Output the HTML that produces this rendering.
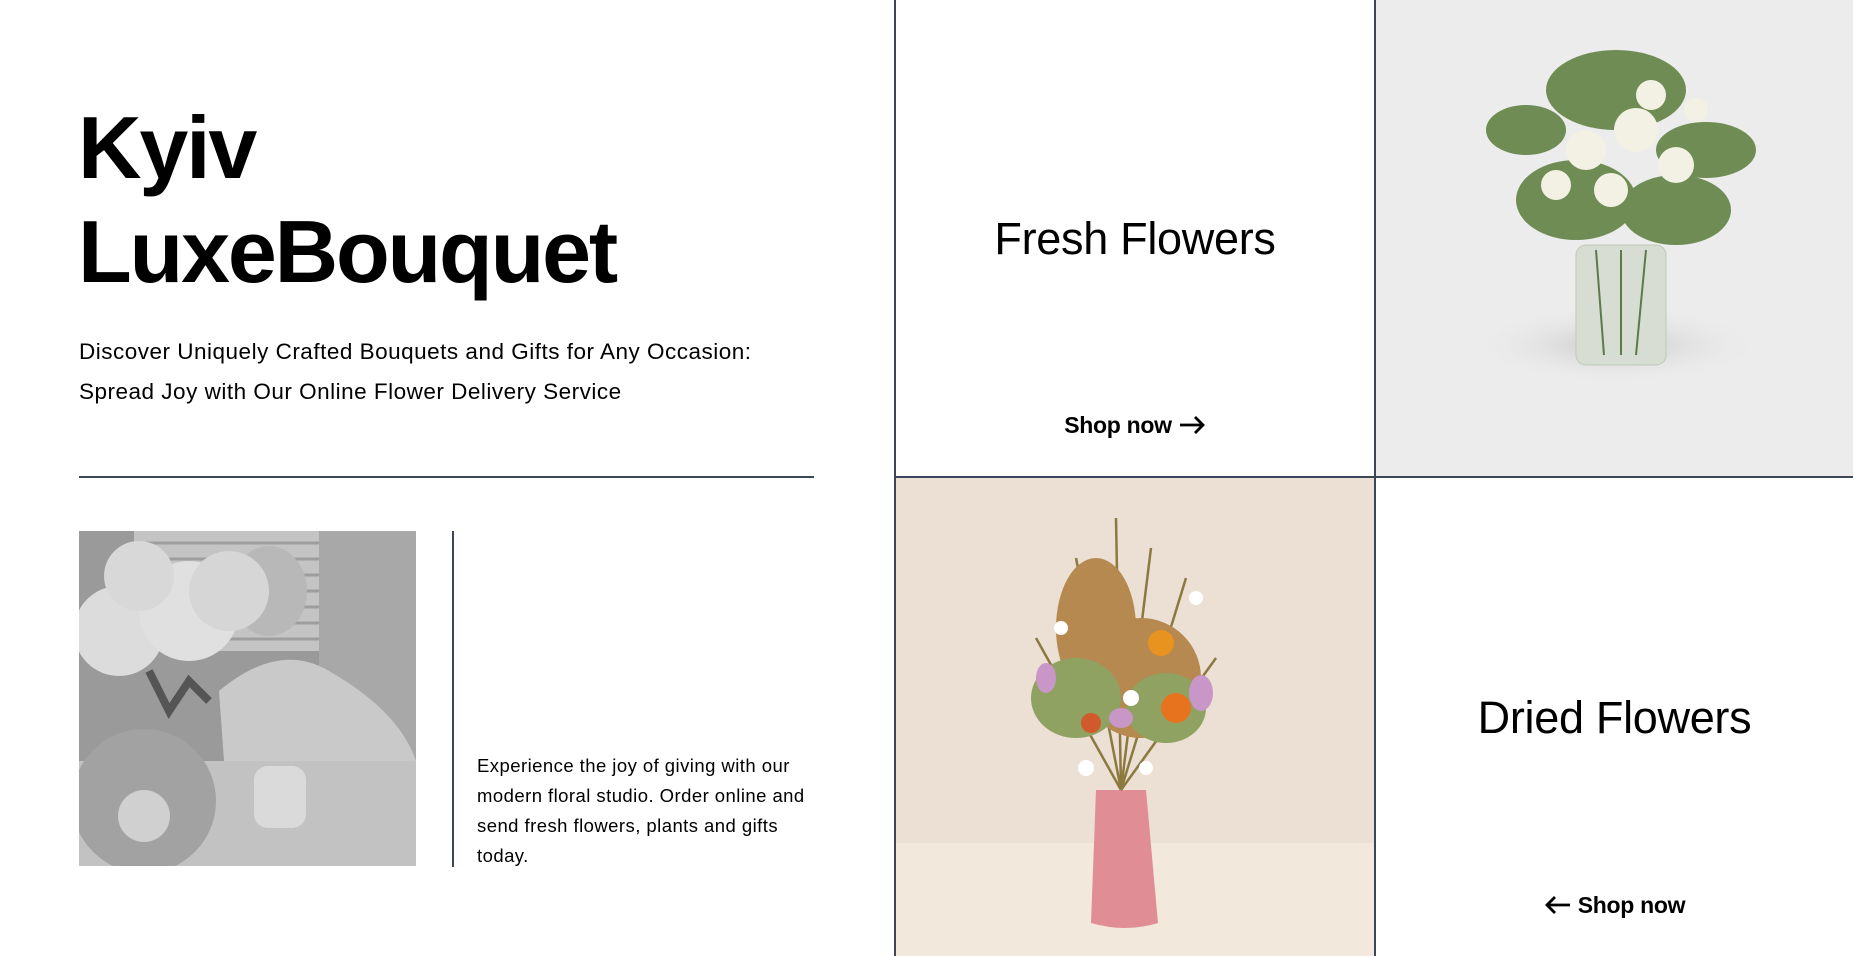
<!DOCTYPE html>
<html><head><meta charset="utf-8">
<style>
*{margin:0;padding:0;box-sizing:border-box}
body{width:1853px;height:956px;overflow:hidden;background:#fff;font-family:"Liberation Sans",sans-serif;color:#000;position:relative}
.abs{position:absolute}
h1{position:absolute;left:78px;top:96px;font-size:88px;line-height:104px;font-weight:700;letter-spacing:-2.2px}
.sub{left:79px;top:332px;font-size:22.5px;line-height:40px;letter-spacing:0.5px}
.para{left:477px;top:751px;font-size:18.5px;line-height:30px;width:335px;letter-spacing:0.45px}
.cell{position:absolute;display:flex;align-items:center;justify-content:center}
.title{font-size:45px;letter-spacing:-0.3px}
.shop{font-size:23px;font-weight:700;letter-spacing:-0.3px;display:flex;align-items:center;gap:6px}
</style></head><body>
<h1>Kyiv<br>LuxeBouquet</h1>
<div class="abs sub">Discover Uniquely Crafted Bouquets and Gifts for Any Occasion:<br>Spread Joy with Our Online Flower Delivery Service</div>
<div class="abs" style="left:79px;top:476px;width:735px;height:2px;background:#3b4658"></div>
<svg class="abs" style="left:79px;top:531px" width="337" height="335" viewBox="0 0 337 335">
<rect width="337" height="335" fill="#9a9a9a"/>
<rect x="55" y="0" width="185" height="120" fill="#c4c4c4"/>
<g stroke="#9e9e9e" stroke-width="3">
<line x1="55" y1="12" x2="240" y2="12"/><line x1="55" y1="28" x2="240" y2="28"/><line x1="55" y1="44" x2="240" y2="44"/><line x1="55" y1="60" x2="240" y2="60"/><line x1="55" y1="76" x2="240" y2="76"/><line x1="55" y1="92" x2="240" y2="92"/><line x1="55" y1="108" x2="240" y2="108"/></g>
<rect x="240" y="0" width="97" height="335" fill="#a8a8a8"/>
<path d="M140 160 Q200 110 250 140 Q320 180 337 230 L337 300 L150 300 Z" fill="#c9c9c9"/>
<ellipse cx="190" cy="60" rx="38" ry="45" fill="#b8b8b8"/>
<rect x="0" y="230" width="337" height="105" fill="#c2c2c2"/>
<circle cx="40" cy="100" r="45" fill="#dcdcdc"/><circle cx="110" cy="80" r="50" fill="#e0e0e0"/><circle cx="150" cy="60" r="40" fill="#d6d6d6"/><circle cx="60" cy="45" r="35" fill="#d8d8d8"/>
<path d="M70 140 L90 180 L110 150 L130 170" stroke="#555" stroke-width="8" fill="none"/>
<circle cx="65" cy="270" r="72" fill="#a2a2a2"/><circle cx="65" cy="285" r="26" fill="#d0d0d0"/>
<rect x="175" y="235" width="52" height="62" rx="14" fill="#dadada"/>
</svg>
<div class="abs" style="left:452px;top:531px;width:2px;height:336px;background:#3b4658"></div>
<div class="abs para">Experience the joy of giving with our modern floral studio. Order online and send fresh flowers, plants and gifts today.</div>

<div class="abs" style="left:894px;top:0;width:2px;height:956px;background:#3b4658"></div>
<div class="abs" style="left:1374px;top:0;width:2px;height:956px;background:#3b4658"></div>
<div class="abs" style="left:895px;top:476px;width:958px;height:2px;background:#3b4658"></div>

<div class="cell title" style="left:896px;top:200px;width:478px;height:78px">Fresh Flowers</div>
<div class="cell" style="left:896px;top:408px;width:478px;height:34px"><span class="shop">Shop now <svg width="28" height="20" viewBox="0 0 28 20"><path d="M2 10H25M17 2l8 8-8 8" stroke="#000" stroke-width="2.8" fill="none"/></svg></span></div>

<svg class="abs" style="left:1376px;top:0" width="477" height="476" viewBox="0 0 477 476">
<defs><radialGradient id="sh"><stop offset="0" stop-color="#c8c8c8"/><stop offset="1" stop-color="#ececec" stop-opacity="0"/></radialGradient></defs>
<rect width="477" height="476" fill="#ececec"/>
<ellipse cx="240" cy="345" rx="150" ry="40" fill="url(#sh)"/>
<rect x="200" y="245" width="90" height="120" rx="10" fill="#d7ddd2" stroke="#bfc7bb"/>
<g stroke="#5d7a4a" stroke-width="2"><line x1="220" y1="250" x2="228" y2="355"/><line x1="245" y1="250" x2="245" y2="355"/><line x1="270" y1="250" x2="260" y2="355"/></g>
<g fill="#6f8c55"><ellipse cx="150" cy="130" rx="40" ry="25"/><ellipse cx="330" cy="150" rx="50" ry="28"/><ellipse cx="240" cy="90" rx="70" ry="40"/><ellipse cx="200" cy="200" rx="60" ry="40"/><ellipse cx="300" cy="210" rx="55" ry="35"/></g>
<g fill="#f3f1e4"><circle cx="210" cy="150" r="20"/><circle cx="260" cy="130" r="22"/><circle cx="300" cy="165" r="18"/><circle cx="235" cy="190" r="17"/><circle cx="180" cy="185" r="15"/><circle cx="275" cy="95" r="15"/><circle cx="320" cy="110" r="12"/></g>
</svg>

<svg class="abs" style="left:896px;top:478px" width="478" height="478" viewBox="0 0 478 478">
<rect width="478" height="478" fill="#ecdfd3"/>
<rect y="365" width="478" height="113" fill="#f3e8dc"/>
<path d="M200 312 L250 312 L262 445 Q230 455 195 445 Z" fill="#e08d96"/>
<g stroke="#8a7a40" stroke-width="2.5"><line x1="225" y1="312" x2="180" y2="80"/><line x1="225" y1="312" x2="255" y2="70"/><line x1="225" y1="312" x2="220" y2="40"/><line x1="225" y1="312" x2="290" y2="100"/><line x1="225" y1="312" x2="140" y2="160"/><line x1="225" y1="312" x2="320" y2="180"/></g>
<g fill="#b5894f"><ellipse cx="200" cy="150" rx="40" ry="70"/><ellipse cx="245" cy="200" rx="60" ry="60"/></g>
<g fill="#8fa262"><ellipse cx="180" cy="220" rx="45" ry="40"/><ellipse cx="270" cy="230" rx="40" ry="35"/></g>
<circle cx="265" cy="165" r="13" fill="#e8931f"/><circle cx="280" cy="230" r="15" fill="#e8731f"/><circle cx="195" cy="245" r="10" fill="#d05a2c"/>
<g fill="#c996c8"><ellipse cx="305" cy="215" rx="12" ry="18"/><ellipse cx="150" cy="200" rx="10" ry="15"/><ellipse cx="225" cy="240" rx="12" ry="10"/></g>
<g fill="#fff"><circle cx="300" cy="120" r="7"/><circle cx="165" cy="150" r="7"/><circle cx="235" cy="220" r="8"/><circle cx="190" cy="290" r="8"/><circle cx="250" cy="290" r="7"/></g>
</svg>

<div class="cell title" style="left:1376px;top:679px;width:477px;height:78px">Dried Flowers</div>
<div class="cell" style="left:1376px;top:888px;width:477px;height:34px"><span class="shop"><svg width="28" height="20" viewBox="0 0 28 20"><path d="M26 10H3M11 2L3 10l8 8" stroke="#000" stroke-width="2.8" fill="none"/></svg> Shop now</span></div>
</body></html>
